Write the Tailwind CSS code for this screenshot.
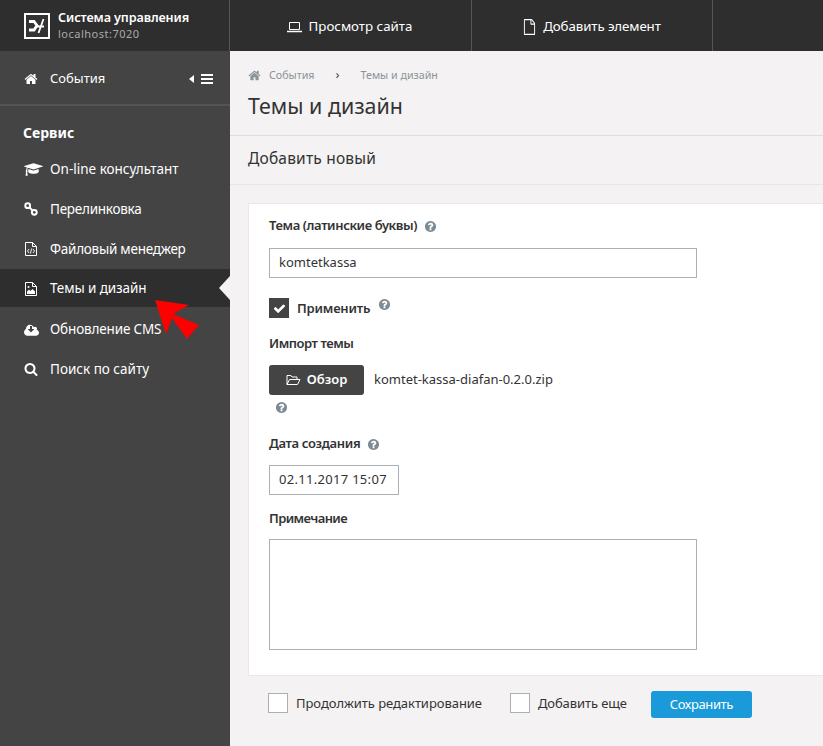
<!DOCTYPE html>
<html lang="ru">
<head>
<meta charset="UTF-8">
<title>Темы и дизайн</title>
<script src="https://cdn.jsdelivr.net/npm/@tailwindcss/browser@4"></script>
</head>
<body class="h-[746px] w-[823px] overflow-hidden bg-[#f4f2f3] font-['Noto_Sans',sans-serif] text-[14px] text-[#333]">
<div class="relative flex h-[746px] w-[823px]">

  <!-- sidebar -->
  <aside class="flex h-full w-[230px] shrink-0 flex-col bg-[#444] text-[#fff]">
    <div class="flex h-[51px] items-center gap-[8px] border-r border-[#555] bg-[#2e2e2e] pl-[24px]">
      <div class="flex h-[26px] w-[26px] items-center justify-center border-2 border-white bg-[#333]">
        <svg class="h-[18px] w-[18px]" viewBox="0 0 18 18" fill="none" stroke="#fff"><path stroke-width="2.800" d="M1 4.500h5l3 4-3 4.500H1"/><path stroke-width="1.800" d="M15.500 2L10.500 16M9 9.500h7"/></svg>
      </div>
      <div class="leading-none">
        <div class="text-[12.6px] font-semibold tracking-[-0.1px] leading-[16px]">Система управления</div>
        <div class="text-[11px] leading-[16px] tracking-[0.5px] text-[#aaa]">localhost:7020</div>
      </div>
    </div>
    <div class="flex h-[55px] items-center border-b-[2px] border-[#555] pl-[24px] pr-[17px] pt-[2px]">
      <svg class="h-[14px] w-[14px] fill-white" viewBox="0 0 1792 1792"><path d="M1472 992v480q0 26-19 45t-45 19h-384v-384h-256v384h-384q-26 0-45-19t-19-45v-480q0-1 .5-3t.5-3l575-474 575 474q1 2 1 6zm223-69l-62 74q-8 9-21 11h-3q-13 0-21-7l-692-577-692 577q-12 8-24 7-13-2-21-11l-62-74q-8-10-7-23.5t11-21.5l719-599q32-26 76-26t76 26l244 204v-195q0-14 9-23t23-9h192q14 0 23 9t9 23v408l219 182q10 8 11 21.5t-7 23.5z"/></svg>
      <span class="ml-[12px] flex-1 text-[13px]">События</span>
      <span class="mr-[7px] h-0 w-0 border-y-[4px] border-r-[5px] border-y-transparent border-r-white"></span>
      <span class="flex w-[12px] flex-col gap-[2px]"><i class="h-[2px] bg-white"></i><i class="h-[2px] bg-white"></i><i class="h-[2px] bg-white"></i></span>
    </div>
    <div class="px-[23px] pb-[6px] pt-[17px] text-[14px] font-bold leading-[20px]">Сервис</div>
    <nav class="text-[13.5px]">
      <a class="flex h-[40px] items-center pl-[24px]">
        <svg class="h-[15px] w-[19px] fill-white" viewBox="0 0 2304 1792"><path d="M1774 836l18 316q4 69-82 128t-235 93.5-323 34.5-323-34.5-235-93.5-82-128l18-316 574 181q22 7 48 7t48-7zm530-324q0 23-22 31l-1120 352q-4 1-10 1t-10-1l-652-206q-43 34-71 111.5t-34 178.5q63 36 63 109 0 69-58 107l58 433q2 14-8 25-9 11-24 11h-192q-15 0-24-11-10-11-8-25l58-433q-58-38-58-107 0-73 65-111 11-207 98-330l-333-104q-22-8-22-31t22-31l1120-352q4-1 10-1t10 1l1120 352q22 8 22 31z"/></svg>
        <span class="ml-[7px]">On-line консультант</span>
      </a>
      <a class="flex h-[40px] items-center pl-[24px]">
        <svg class="h-[14px] w-[14px]" viewBox="0 0 14 14" fill="none" stroke="#fff" stroke-width="2"><circle cx="3.700" cy="3.700" r="2.400"/><circle cx="10.300" cy="10.300" r="2.400"/><path d="M5.500 5.500l3 3"/></svg>
        <span class="ml-[12px] tracking-[-0.25px]">Перелинковка</span>
      </a>
      <a class="flex h-[40px] items-center pl-[25px]">
        <svg class="h-[14px] w-[12px]" viewBox="0 0 12 14" fill="none" stroke="#fff"><path d="M.5.5h7l4 4v9H.5z M7.500.5v4h4"/><path stroke-width=".9" d="M4 7L2.500 9 4 11M8 7l1.500 2L8 11M6.600 6.500l-1.200 5"/></svg>
        <span class="ml-[13px] tracking-[-0.25px]">Файловый менеджер</span>
      </a>
      <a class="relative mb-[2px] flex h-[38px] items-center bg-[#2e2e2e] pl-[25px] pt-[1px]">
        <svg class="h-[14px] w-[12px]" viewBox="0 0 12 14" fill="none" stroke="#fff"><path d="M.5.5h7l4 4v9H.5z M7.500.5v4h4"/><path fill="#fff" stroke="none" d="M2 12V9.500l2-2 1.500 1.500 2-2 2.500 2.500V12z"/><circle cx="3.500" cy="5" r="1" fill="#fff" stroke="none"/></svg>
        <span class="ml-[13px] tracking-[-0.1px]">Темы и дизайн</span>
        <span class="absolute right-0 top-[7px] h-0 w-0 border-y-[12px] border-r-[11px] border-y-transparent border-r-[#f4f2f3]"></span>
      </a>
      <a class="flex h-[40px] items-center pl-[24px]">
        <svg class="h-[14px] w-[15px] fill-white" viewBox="0 0 1920 1792"><path d="M1280 928q0-14-9-23t-23-9h-224v-352q0-13-9.500-22.500t-22.500-9.500h-192q-13 0-22.500 9.500t-9.500 22.500v352h-224q-13 0-22.500 9.500t-9.500 22.500q0 14 9 23l352 352q9 9 23 9t23-9l351-351q10-12 10-24zm640 448q0 159-112.500 271.500t-271.500 112.500h-1088q-185 0-316.500-131.500t-131.500-316.500q0-130 70-240t188-165q-2-30-2-43 0-212 150-362t362-150q156 0 285.500 87t188.500 231q71-62 166-62 106 0 181 75t75 181q0 76-41 138 130 31 213.500 135.500t83.500 238.500z"/></svg>
        <span class="ml-[11px] tracking-[-0.15px]">Обновление CMS</span>
      </a>
      <a class="flex h-[40px] items-center pl-[24px]">
        <svg class="h-[14px] w-[14px] fill-white" viewBox="0 0 1792 1792"><path d="M1216 832q0-185-131.500-316.500t-316.500-131.500-316.500 131.500-131.500 316.500 131.500 316.500 316.500 131.500 316.500-131.500 131.500-316.500zm512 832q0 52-38 90t-90 38q-54 0-90-38l-343-342q-179 124-399 124-143 0-273.500-55.500t-225-150-150-225-55.500-273.500 55.500-273.500 150-225 225-150 273.500-55.500 273.500 55.500 225 150 150 225 55.500 273.500q0 220-124 399l343 343q37 37 37 90z"/></svg>
        <span class="ml-[12px]">Поиск по сайту</span>
      </a>
    </nav>
  </aside>

  <!-- main -->
  <main class="flex min-w-0 flex-1 flex-col">
    <div class="flex h-[51px] shrink-0 bg-[#2e2e2e] text-[13.3px] text-white">
      <a class="flex w-[242px] shrink-0 items-center justify-center gap-[7px] border-r border-[#555] pr-[2px] pt-[3px]">
        <svg class="h-[13px] w-[15px]" viewBox="0 0 15 13" fill="none" stroke="#fff"><path d="M2.500 1.500h10v7h-10z"/><path stroke-width="1.500" d="M0 10.500h15"/></svg>
        Просмотр сайта
      </a>
      <a class="flex w-[241px] shrink-0 items-center justify-center gap-[7px] border-r border-[#555] pt-[3px]">
        <svg class="h-[16px] w-[13px]" viewBox="0 0 1792 1792" preserveAspectRatio="none"><path fill="#fff" d="M1596 380q28 28 48 76t20 88v1152q0 40-28 68t-68 28h-1344q-40 0-68-28t-28-68v-1600q0-40 28-68t68-28h896q40 0 88 20t76 48zm-444-244v376h376q-10-29-22-41l-313-313q-12-12-41-22zm384 1528v-1024h-416q-40 0-68-28t-28-68v-416h-768v1536h1280z"/></svg>
        <span class="tracking-[-0.1px]">Добавить элемент</span>
      </a>
    </div>

    <div class="h-[85px] shrink-0 border-b border-[#ddd] pl-[18px]">
      <div class="flex h-[48px] items-center text-[10.7px] text-[#8d9499]">
        <svg class="mr-[8px] h-[13px] w-[13px] fill-[#8d9499]" viewBox="0 0 1792 1792"><path d="M1472 992v480q0 26-19 45t-45 19h-384v-384h-256v384h-384q-26 0-45-19t-19-45v-480q0-1 .5-3t.5-3l575-474 575 474q1 2 1 6zm223-69l-62 74q-8 9-21 11h-3q-13 0-21-7l-692-577-692 577q-12 8-24 7-13-2-21-11l-62-74q-8-10-7-23.5t11-21.5l719-599q32-26 76-26t76 26l244 204v-195q0-14 9-23t23-9h192q14 0 23 9t9 23v408l219 182q10 8 11 21.5t-7 23.5z"/></svg>
        События
        <span class="mx-[21px] text-[13px] text-[#444]">›</span>
        Темы и дизайн
      </div>
      <h1 class="mt-[-3px] text-[21.4px] font-normal leading-[20px] text-[#333]">Темы и дизайн</h1>
    </div>

    <div class="flex h-[49px] shrink-0 items-center border-b border-[#e6e6e6] pb-[2px] pl-[18px] text-[15.5px] tracking-[0.2px]">Добавить новый</div>

    <section class="ml-[18px] mt-[18px] h-[473px] shrink-0 border border-r-0 border-[#e8e8e8] bg-white pl-[20px] pt-[12px]">
      <div class="flex h-[20px] items-center gap-[7px] text-[13px] font-semibold tracking-[-0.4px]">
        Тема (латинские буквы)
        <svg class="h-[13px] w-[13px] fill-[#7f8b94]" viewBox="0 0 1792 1792"><path d="M1024 1376v-192q0-14-9-23t-23-9h-192q-14 0-23 9t-9 23v192q0 14 9 23t23 9h192q14 0 23-9t9-23zm256-672q0-88-55.500-163t-138.500-116-170-41q-243 0-371 213-15 24 8 42l132 100q7 6 19 6 16 0 25-12 53-68 86-92 34-24 86-24 48 0 85.500 26t37.500 59q0 38-20 61t-68 45q-63 28-115.500 86.500t-52.500 125.500v36q0 14 9 23t23 9h192q14 0 23-9t9-23q0-19 21.500-49.500t54.500-49.500q32-18 49-28.500t46-35 44.500-48 28-60.500 12.500-81zm384 192q0 209-103 385.500t-279.500 279.500-385.500 103-385.500-103-279.500-279.500-103-385.500 103-385.500 279.500-279.500 385.500-103 385.500 103 279.500 279.500 103 385.500z"/></svg>
      </div>
      <div class="mt-[12px] flex h-[30px] w-[428px] items-center border border-[#aab0b4] pl-[9px] text-[13px]">komtetkassa</div>

      <div class="mt-[20px] flex h-[20px] items-center">
        <span class="flex h-[20px] w-[20px] items-center justify-center bg-[#444]">
          <svg class="h-[13px] w-[13px] fill-white" viewBox="0 0 1792 1792"><path d="M1671 566q0 40-28 68l-724 724-136 136q-28 28-68 28t-68-28l-136-136-362-362q-28-28-28-68t28-68l136-136q28-28 68-28t68 28l294 295 656-657q28-28 68-28t68 28l136 136q28 28 28 68z"/></svg>
        </span>
        <span class="ml-[8px] pt-[1px] text-[13px] font-semibold tracking-[-0.2px]">Применить</span>
        <svg class="relative ml-[8px] top-[-4px] h-[13px] w-[13px] fill-[#7f8b94]" viewBox="0 0 1792 1792"><path d="M1024 1376v-192q0-14-9-23t-23-9h-192q-14 0-23 9t-9 23v192q0 14 9 23t23 9h192q14 0 23-9t9-23zm256-672q0-88-55.500-163t-138.500-116-170-41q-243 0-371 213-15 24 8 42l132 100q7 6 19 6 16 0 25-12 53-68 86-92 34-24 86-24 48 0 85.500 26t37.500 59q0 38-20 61t-68 45q-63 28-115.500 86.500t-52.500 125.500v36q0 14 9 23t23 9h192q14 0 23-9t9-23q0-19 21.500-49.500t54.500-49.500q32-18 49-28.500t46-35 44.500-48 28-60.500 12.500-81zm384 192q0 209-103 385.500t-279.500 279.500-385.500 103-385.500-103-279.500-279.500-103-385.500 103-385.500 279.500-279.500 385.500-103 385.500 103 279.500 279.500 103 385.500z"/></svg>
      </div>

      <div class="mt-[15px] text-[13px] font-semibold leading-[20px] tracking-[-0.45px]">Импорт темы</div>
      <div class="mt-[12px] flex h-[30px] items-center">
        <span class="flex h-[30px] w-[95px] items-center justify-center gap-[6px] rounded-[3px] bg-[#444] text-[13px] font-semibold text-white">
          <svg class="h-[12px] w-[15px]" viewBox="0 0 15 12" fill="none" stroke="#fff"><path d="M1 10.500V1.500h4l1 1.500h5v2M1 10.500h10.500L14 5.500H3.500z"/></svg>
          Обзор
        </span>
        <span class="ml-[10px] text-[13px]">komtet-kassa-diafan-0.2.0.zip</span>
      </div>
      <svg class="ml-[6px] mt-[6px] h-[13px] w-[13px] fill-[#7f8b94]" viewBox="0 0 1792 1792"><path d="M1024 1376v-192q0-14-9-23t-23-9h-192q-14 0-23 9t-9 23v192q0 14 9 23t23 9h192q14 0 23-9t9-23zm256-672q0-88-55.500-163t-138.500-116-170-41q-243 0-371 213-15 24 8 42l132 100q7 6 19 6 16 0 25-12 53-68 86-92 34-24 86-24 48 0 85.500 26t37.500 59q0 38-20 61t-68 45q-63 28-115.500 86.500t-52.500 125.500v36q0 14 9 23t23 9h192q14 0 23-9t9-23q0-19 21.500-49.500t54.500-49.500q32-18 49-28.500t46-35 44.500-48 28-60.500 12.500-81zm384 192q0 209-103 385.500t-279.500 279.500-385.500 103-385.500-103-279.500-279.500-103-385.500 103-385.500 279.500-279.500 385.500-103 385.500 103 279.500 279.500 103 385.500z"/></svg>

      <div class="mt-[20px] flex h-[20px] items-center gap-[7px] text-[13px] font-semibold tracking-[-0.35px]">
        Дата создания
        <svg class="h-[13px] w-[13px] fill-[#7f8b94]" viewBox="0 0 1792 1792"><path d="M1024 1376v-192q0-14-9-23t-23-9h-192q-14 0-23 9t-9 23v192q0 14 9 23t23 9h192q14 0 23-9t9-23zm256-672q0-88-55.500-163t-138.500-116-170-41q-243 0-371 213-15 24 8 42l132 100q7 6 19 6 16 0 25-12 53-68 86-92 34-24 86-24 48 0 85.500 26t37.500 59q0 38-20 61t-68 45q-63 28-115.500 86.500t-52.500 125.500v36q0 14 9 23t23 9h192q14 0 23-9t9-23q0-19 21.500-49.500t54.500-49.500q32-18 49-28.500t46-35 44.500-48 28-60.500 12.500-81zm384 192q0 209-103 385.500t-279.500 279.500-385.500 103-385.500-103-279.500-279.500-103-385.500 103-385.500 279.500-279.500 385.500-103 385.500 103 279.500 279.500 103 385.500z"/></svg>
      </div>
      <div class="mt-[11px] flex h-[30px] w-[130px] items-center border border-[#aab0b4] pl-[9px] text-[13px] tracking-[0.3px]">02.11.2017 15:07</div>
      <div class="mt-[13px] text-[13px] font-semibold leading-[20px] tracking-[-0.6px]">Примечание</div>
      <div class="mt-[11px] h-[111px] w-[428px] border border-[#aab0b4]"></div>
    </section>

    <div class="ml-[38px] mt-[15px] flex h-[28px] items-start text-[13px]">
      <span class="mt-[2px] h-[20px] w-[20px] border border-[#aab0b4] bg-white"></span>
      <span class="ml-[8px] mt-[2px] leading-[20px] tracking-[-0.05px]">Продолжить редактирование</span>
      <span class="ml-[28px] mt-[2px] h-[20px] w-[20px] border border-[#aab0b4] bg-white"></span>
      <span class="ml-[8px] mt-[2px] leading-[20px] tracking-[-0.1px]">Добавить еще</span>
      <span class="ml-[24px] flex h-[27px] w-[101px] items-center justify-center rounded-[3px] bg-[#1a9ad9] tracking-[-0.4px] text-white">Сохранить</span>
    </div>
  </main>

  <!-- red pointer arrow over the screenshot -->
  <svg class="absolute left-[150px] top-[295px] h-[50px] w-[52px]" viewBox="0 0 52 50"><path fill="#f00" d="M5 5l34 5-16 9 26 11-12 14-15-21-6 16z"/></svg>
</div>
</body>
</html>
